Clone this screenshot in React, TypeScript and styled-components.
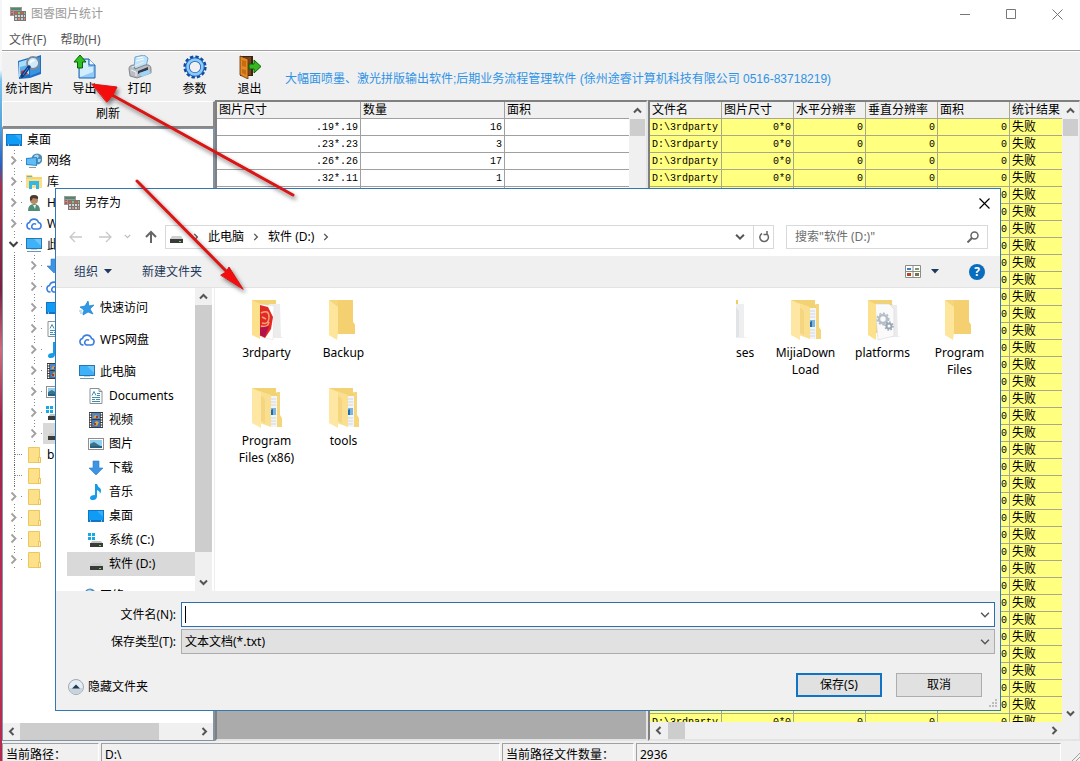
import React from "react";
import styled, { createGlobalStyle, css } from "styled-components";

const uiFont = `"Noto Sans", "Noto Sans CJK SC", sans-serif`;
const gridFont = `"Liberation Mono", "Noto Sans CJK SC", monospace`;

const GlobalStyle = createGlobalStyle`
  *, *::before, *::after { box-sizing: border-box; }
  body { margin: 0; overflow: hidden; background: #f0f0f0; color: #000; font: 12px/16px ${uiFont}; }
  button, input, select { font: inherit; color: inherit; margin: 0; padding: 0; border: 0; background: none; border-radius: 0; outline: none; }
  ul { list-style: none; margin: 0; padding: 0; }
  svg { display: block; flex: none; }
`;

/* ---------- icons ---------- */

type Kind =
  | "desktop" | "network" | "library" | "user" | "cloud" | "pc" | "download" | "doc"
  | "music" | "film" | "picture" | "windrive" | "drive" | "folder" | "star" | "app";

const shapes: Record<Kind, React.ReactNode> = {
  app: (
    <>
      <rect x="0" y="1" width="12" height="9" fill="#9a9a9a" />
      <rect x="1" y="2" width="10" height="2" fill="#4f8a6a" />
      <path d="M1 5h2v1H1zM1 7h2v2H1z" fill="#d9483a" />
      <path d="M4 5h2v1H4zM7 5h2v1H7z" fill="#e8e8e8" />
      <rect x="4" y="5" width="12" height="10" fill="#777" />
      <path d="M5 6h2v2H5zM11 6h2v2h-2z" fill="#e8534a" />
      <path d="M8 6h2v2H8zM14 6h1v2h-1z" fill="#7fc76b" />
      <path d="M5 9h2v2H5zM8 9h2v2H8zM11 9h2v2h-2zM14 9h1v2h-1z" fill="#d4d4d4" />
      <path d="M5 12h2v2H5zM11 12h2v2h-2z" fill="#c9c9c9" />
      <path d="M8 12h2v2H8zM14 12h1v2h-1z" fill="#e08a6a" />
    </>
  ),
  desktop: (
    <>
      <rect x="0" y="2" width="16" height="12" fill="#1275c4" />
      <rect x="1" y="3" width="14" height="9" fill="#109cf5" />
      <path d="M9 3h6v6z" fill="#36aefb" />
      <path d="M2 13h1M13 13h1" stroke="#fff" />
    </>
  ),
  network: (
    <>
      <circle cx="11" cy="6" r="5.500" fill="#4d8db8" />
      <path d="M8 3q3-3 5 0l-1 2-3 1zM12 6l3 0-1 3-2 0z" fill="#a8d5ee" />
      <path d="M0 5l11-1v9l-11-1z" fill="#2e87cf" />
      <path d="M1 6l9-1v7l-9-1z" fill="#63bdf4" />
      <path d="M3 14h7v1H3z" fill="#8d9aa5" />
    </>
  ),
  library: (
    <>
      <path d="M0 1h6l1 2h9v11H0z" fill="#f6d56e" />
      <path d="M1 2h5v1H1z" fill="#58b8e0" />
      <path d="M0 5h16v9H0z" fill="#fbe08a" />
      <path d="M3 7h10v8h-3v-4H6v4H3z" fill="#35b6e8" />
    </>
  ),
  user: (
    <>
      <path d="M2 16q0-7 6-7t6 7z" fill="#4f8d76" />
      <path d="M7 10l2 4 1-4z" fill="#eee" />
      <circle cx="8" cy="5" r="4" fill="#b98a66" />
      <path d="M4 5q-1-5 4-5t4 4l-5-1-2 3z" fill="#463a32" />
    </>
  ),
  cloud: (
    <path d="M4 13a3.300 3.300 0 0 1-.5-6.500A4.700 4.700 0 0 1 12.500 6.500 3.300 3.300 0 0 1 12 13H7.500q-2.500-1-1.500-3.500t3.500-1.500" fill="none" stroke="#3b7ee0" strokeWidth="1.600" strokeLinecap="round" />
  ),
  pc: (
    <>
      <rect x="0" y="1" width="16" height="11" fill="#2477b5" />
      <rect x="1" y="2" width="14" height="9" fill="#3fb1f8" />
      <path d="M8 2h7v7z" fill="#6cc6fb" />
      <path d="M5 12h6v1H5z" fill="#c4d2dc" />
      <path d="M1 14h14v1H1z" fill="#6f94ae" />
    </>
  ),
  download: <path d="M5 1h6v7h4l-7 7-7-7h4z" fill="#3f93e4" stroke="#2b7ac8" strokeWidth=".6" />,
  doc: (
    <>
      <path d="M2 .5h9l3 3v12H2z" fill="#fff" stroke="#8a9299" />
      <path d="M11 .5v3h3" fill="none" stroke="#8a9299" />
      <path d="M4 7.500l2-4 2 4M9 5.500h3M9 7.500h3M4 9.500h8M4 11.500h3M8 11.500h4M4 13.500h8" fill="none" stroke="#3f8fae" />
    </>
  ),
  music: <path d="M7 0h2q1 3 3 4 2 2 0 6 0-3-3-4v6q0 4-4 4-3 0-3-2 0-3 5-3z" fill="#149bea" />,
  film: (
    <>
      <rect x="1" y="0" width="14" height="16" fill="#3a3a3a" />
      <path d="M2.500 1v14M13.500 1v14" stroke="#fff" strokeWidth="1.500" strokeDasharray="1.500 1" />
      <rect x="4" y="1" width="8" height="6" fill="#4f86c6" />
      <rect x="4" y="8" width="8" height="7" fill="#3d74b8" />
      <path d="M5 6l2-3 3 1 1 2zM5 13l3-4 3 1-2 4z" fill="#e0a23c" />
      <path d="M8 4h2v2H8zM6 11h2v2H6z" fill="#a33a2c" />
    </>
  ),
  picture: (
    <>
      <rect x=".5" y="2.500" width="15" height="11" fill="#fff" stroke="#8f8f8f" />
      <rect x="2" y="4" width="12" height="8" fill="#8fd0f2" />
      <path d="M2 8l4-2 8 5v1H2z" fill="#3c7187" />
      <path d="M2 10h12v2H2z" fill="#27617e" />
    </>
  ),
  windrive: (
    <>
      <path d="M0 1h3v3H0zM4 1h3v3H4zM0 5h3v3H0zM4 5h3v3H4z" fill="#16a9e8" />
      <path d="M4 9h9l2 3H2z" fill="#c4c4c4" />
      <path d="M2 11h13v4H2z" fill="#3b3b3b" />
      <path d="M11 13h2v1h-2z" fill="#5fe05f" />
    </>
  ),
  drive: (
    <>
      <path d="M4 7h9l2 3H2z" fill="#cfcfcf" />
      <path d="M2 10h13v4H2z" fill="#3b3b3b" />
      <path d="M11 12h2v1h-2z" fill="#5fe05f" />
    </>
  ),
  folder: (
    <>
      <path d="M2.500.5h11v10h1v5h-12z" fill="#fde08a" stroke="#ecc85c" />
      <path d="M12.500 10.500h2v5h-2z" fill="#fdeebb" stroke="#e6bd4c" strokeWidth=".8" />
    </>
  ),
  star: (
    <>
      <path d="M9 1l1 5 5-1-4 4 3 5-5-2-5 3 1-5-4-3 5-1z" fill="#2f9be8" stroke="#1b7cc6" strokeWidth=".7" />
      <path d="M0 11h3M1 13h3" stroke="#7cc0f0" />
    </>
  ),
};

const Icon = ({ kind }: { kind: Kind }) => (
  <svg width="16" height="16" viewBox="0 0 16 16" aria-hidden="true">{shapes[kind]}</svg>
);

type Dir = "up" | "down" | "left" | "right";
const turns: Record<Dir, number> = { up: 180, down: 0, left: 90, right: 270 };
const Chevron = ({ dir, size = 9, color = "#555", weight = 2 }: { dir: Dir; size?: number; color?: string; weight?: number }) => (
  <svg width={size} height={size} viewBox="0 0 9 9" aria-hidden="true">
    <path d="M1 2.500l3.500 3.500L8 2.500" transform={`rotate(${turns[dir]} 4.5 4.5)`} fill="none" stroke={color} strokeWidth={weight} />
  </svg>
);

const toolIcons: Record<string, React.ReactNode> = {
  stat: (
    <>
      <path d="M0 6l10-3 2 1 11-4v19l-11 4-11 1z" fill="#1d6fc4" />
      <path d="M1 7l10-3v15l-10 3z" fill="#a9dcfa" />
      <path d="M12 5l10-3v15l-10 4z" fill="#3b94e0" />
      <path d="M2 12l8-2v6l-8 3z" fill="#5eaee8" />
      <path d="M3 16l4-1 3 4-7 3z" fill="#c93a2a" />
      <circle cx="15" cy="8" r="6" fill="#cfeafb" stroke="#7a8a9a" strokeWidth="1.800" />
      <path d="M12 6q3-3 5 0-3 0-5 3z" fill="#fff" />
      <path d="M11 12l-7 9" stroke="#123a80" strokeWidth="3.500" strokeLinecap="round" />
      <path d="M10 13l-5 7" stroke="#4a86d8" strokeWidth="1" />
    </>
  ),
  export: (
    <>
      <path d="M6 4h10l6 6v13H6z" fill="#8fcaf8" stroke="#1d62b0" />
      <path d="M7 5h8v7h5v5L7 22z" fill="#d4edfd" />
      <path d="M16 4v6h6" fill="#f3faff" stroke="#1d62b0" />
      <path d="M7 0l6 7H9.500v6h-5V7H1z" fill="#2fbf1f" stroke="#0b5f0b" />
    </>
  ),
  print: (
    <>
      <path d="M7 2l9-2 4 3-2 9-12 2z" fill="#bfe3fa" stroke="#5a93c0" strokeWidth=".8" />
      <path d="M9 3l6-1M8 6l8-2" stroke="#fff" />
      <path d="M1 14q0-4 5-4l1 4 10-4q6-1 6 4v4l-14 5-7-2z" fill="#b9bec4" stroke="#6d737a" strokeWidth=".8" />
      <path d="M3 15l5 2v4" fill="none" stroke="#f5f5f5" />
      <path d="M10 16l10-4v3l-10 4z" fill="#2f3b46" />
      <path d="M11 18l9-3 3 3-9 4z" fill="#9fd4f6" />
      <path d="M4 12l12-5" stroke="#eceff1" />
    </>
  ),
  gear: (
    <>
      <circle cx="12" cy="12" r="9.800" fill="none" stroke="#0e4a9e" strokeWidth="3.600" strokeDasharray="3.200 1.931" />
      <circle cx="12" cy="12" r="7.500" fill="none" stroke="#1d62b8" strokeWidth="4.500" />
      <circle cx="12" cy="12" r="7.400" fill="none" stroke="#8ccbfb" strokeWidth="2.600" />
      <circle cx="12" cy="12" r="4.500" fill="#f0f0f0" />
    </>
  ),
  exit: (
    <>
      <path d="M2 1h13v20H2z" fill="#3a2412" />
      <path d="M4 2h9v18H4z" fill="#7a4318" />
      <path d="M2 1l8 3v20l-8-4z" fill="#e58a23" stroke="#5a3010" strokeWidth=".8" />
      <path d="M4 5l4 1v6l-4-1zM4 14l4 1v5l-4-2z" fill="#c76c14" />
      <path d="M11 9h5V5l7 6.500-7 6.500v-4h-5z" fill="#35b820" stroke="#0b5f0b" />
    </>
  ),
};
const ToolIcon = ({ name }: { name: string }) => (
  <svg width="24" height="24" viewBox="0 0 24 24" aria-hidden="true">{toolIcons[name]}</svg>
);

type FolderKind = "empty" | "red" | "files" | "gears" | "sheet";
const BigFolder = ({ kind }: { kind: FolderKind }) => (
  <svg width="36" height="42" viewBox="0 0 36 42" aria-hidden="true">
    {kind === "empty" && (
      <>
        <path d="M3 1h24v22l2 3v9H9z" fill="#f6d67c" />
        <path d="M12 1h15v22l2 3v9H12z" fill="#f4d070" />
        <path d="M3 1l9 7v26l-1 7-8-5z" fill="#fde59c" />
      </>
    )}
    {kind !== "empty" && kind !== "sheet" && <path d="M3 1h24v4l3 3v26H6z" fill="#f3d274" />}
    {kind === "red" && (
      <>
        <path d="M20 5h11l1 33 3 1-12 0z" fill="#ececec" />
        <path d="M10 5l15 2-1 34-14-4z" fill="#fff" stroke="#ddd" strokeWidth=".5" />
        <path d="M11 6l8 2 5 10-2 12-6 9-6-3z" fill="#e02a22" />
        <path d="M12 14q8-4 8 4t-7 6M12 27q7 2 8-4M13 18l4 2" fill="none" stroke="#f7a07c" strokeWidth="1.500" />
        <path d="M10 29l10-2-4 11-6-2z" fill="#b3124a" />
        <path d="M3 1l8 4v35l-8-4z" fill="#fde08c" />
      </>
    )}
    {kind === "files" && (
      <>
        <path d="M20 9h8v26l2 5h-9z" fill="#f4f4f4" />
        <path d="M22 12h5M22 15h5M22 18h5M22 31h5M22 34h5M22 37h5" stroke="#cfd8de" />
        <path d="M22 21h5v7h-5z" fill="#7fb4dc" />
        <path d="M22 23l2-1v6h-2z" fill="#1c6eb4" />
        <path d="M28 5h3v23l2 3v9h-5z" fill="#f6d67c" />
        <path d="M11 4l11 4v32l-11-4z" fill="#fbdf90" />
        <path d="M12 9q5 1 4 8v19l-5-3z" fill="#f6d580" />
        <path d="M3 1l9 4v36l-9-5z" fill="#fde7a2" />
      </>
    )}
    {kind === "gears" && (
      <>
        <path d="M22 6h10l1 31 3 1-12 0z" fill="#ebebeb" />
        <path d="M10 5h14l5 5v27l-16 4z" fill="#fafafa" stroke="#d8d8d8" strokeWidth=".6" />
        <circle cx="18" cy="20" r="4" fill="none" stroke="#b4bec7" strokeWidth="2.500" />
        <circle cx="18" cy="20" r="5.800" fill="none" stroke="#b4bec7" strokeWidth="1.500" strokeDasharray="2 1.800" />
        <circle cx="24" cy="27" r="2.500" fill="none" stroke="#9aa7b3" strokeWidth="2" />
        <circle cx="24" cy="27" r="4" fill="none" stroke="#9aa7b3" strokeWidth="1.500" strokeDasharray="1.500 1.600" />
        <path d="M3 1l8 5v35l-8-5z" fill="#fde08c" />
      </>
    )}
    {kind === "sheet" && (
      <>
        <path d="M0 1h2v4H0z" fill="#f1cb63" />
        <path d="M0 5h8v33l4 1H0z" fill="#efefef" />
        <path d="M0 8l3 4v26H0z" fill="#e0e4e7" />
      </>
    )}
  </svg>
);

/* ---------- window frame ---------- */

const Screen = styled.div`
  position: relative;
  display: flex;
  height: 100vh;
`;
const Wallpaper = styled.div`
  flex: 0 0 2px;
  background: linear-gradient(#f4f6f8 0, #f4f6f8 70px, #7cc4ec 80px, #4f9fd8 130px, #2b5fc0 165px, #a8304c 185px, #7a2140 290px, #d06a80 350px, #a02048 420px, #c03058 640px, #b42850 100%);
`;
const Window = styled.div`
  flex: 1;
  min-width: 0;
  display: flex;
  flex-direction: column;
  background: #f0f0f0;
`;
const TitleBar = styled.header`
  flex: 0 0 28px;
  display: flex;
  align-items: center;
  padding-left: 8px;
  background: #fff;
  color: #999;
`;
const Caption = styled.span`
  flex: 1;
  padding-left: 5px;
`;
const CaptionButton = styled.button`
  width: 46px;
  height: 28px;
  display: grid;
  place-items: center;
  color: #777;
`;
const MenuBar = styled.nav`
  flex: 0 0 23px;
  display: flex;
  gap: 14px;
  padding: 2px 7px 0;
  background: #fff;
  border-bottom: 1px solid #a0a0a0;
  color: #555;
`;
const ToolBar = styled.div`
  flex: 0 0 49px;
  display: flex;
  align-items: center;
  border-top: 1px solid #fff;
`;
const ToolButton = styled.button`
  width: 55px;
  display: flex;
  flex-direction: column;
  align-items: center;
  gap: 2px;
  white-space: nowrap;
`;
const Slogan = styled.p`
  margin: 6px 0 0 8px;
  color: #2f93e6;
  font-family: "Liberation Sans", "Noto Sans CJK SC", sans-serif;
  white-space: nowrap;
`;
const Main = styled.main`
  flex: 1;
  min-height: 0;
  display: flex;
`;

/* ---------- scroll bars ---------- */

const Bar = styled.div<{ $across?: boolean }>`
  flex: 0 0 17px;
  display: flex;
  flex-direction: ${(p) => (p.$across ? "row" : "column")};
  background: #f0f0f0;
`;
const BarButton = styled.button`
  flex: 0 0 17px;
  min-width: 16px;
  display: grid;
  place-items: center;
`;
const Thumb = styled.div<{ $size: string }>`
  flex: 0 0 ${(p) => p.$size};
  margin: ${(p) => (p.$size === "17px" ? "0 1px" : "0")};
  background: #cdcdcd;
`;
const Space = styled.div`
  flex: 1;
`;
const ScrollBar = ({ across, thumb }: { across?: boolean; thumb: string }) => (
  <Bar $across={across}>
    <BarButton aria-label={across ? "向左" : "向上"}><Chevron dir={across ? "left" : "up"} /></BarButton>
    <Thumb $size={thumb} />
    <Space />
    <BarButton aria-label={across ? "向右" : "向下"}><Chevron dir={across ? "right" : "down"} /></BarButton>
  </Bar>
);

/* ---------- tree pane ---------- */

const TreePane = styled.section`
  flex: 0 0 213px;
  display: flex;
  flex-direction: column;
`;
const RefreshButton = styled.button`
  flex: 0 0 27px;
  margin-top: 1px;
  border: 1px solid #fff;
  border-right: 2px solid #888;
  border-bottom: 2px solid #888;
  background: #f0f0f0;
`;
const TreeBox = styled.div`
  flex: 1;
  min-height: 0;
  display: flex;
  flex-direction: column;
  border: 1px solid #8293a6;
  border-right-width: 2px;
  background: #fff;
`;
const TreeList = styled.ul`
  flex: 1;
  min-height: 0;
  overflow: hidden;
`;
const TreeRow = styled.li`
  height: 21px;
  display: flex;
`;
const TreeItem = styled.button<{ $selected?: boolean }>`
  display: flex;
  align-items: center;
  gap: 5px;
  padding: 0 3px;
  white-space: nowrap;
  background: ${(p) => (p.$selected ? "#d9d9d9" : "none")};
`;

type Gutter = "closed" | "open" | "leaf" | "through";
const GutterCell = ({ type }: { type: Gutter }) => (
  <svg width="20" height="21" viewBox="0 0 20 21" aria-hidden="true">
    {(type === "leaf" || type === "through") && <path d="M11.500 0v21" stroke="#666" strokeDasharray="1 1" />}
    {type === "leaf" && <path d="M12 10.500h8" stroke="#888" strokeDasharray="1 1" />}
    {(type === "closed" || type === "open") && (
      <>
        <path d="M11.500 0v4M11.500 18v3M18 10.500h2" stroke="#888" strokeDasharray="1 2" />
        {type === "closed" ? (
          <path d="M8.500 6.500l4 4-4 4" fill="none" stroke="#a0a0a0" strokeWidth="1.800" />
        ) : (
          <path d="M6.500 8l4 4 4-4" fill="none" stroke="#404040" strokeWidth="2" />
        )}
      </>
    )}
  </svg>
);

type Node = { icon: Kind; label: string; gutters: Gutter[]; selected?: boolean };
const nested = (icon: Kind, selected?: boolean): Node => ({ icon, label: "", gutters: ["through", "closed"], selected });
const tree: Node[] = [
  { icon: "desktop", label: "桌面", gutters: [] },
  { icon: "network", label: "网络", gutters: ["closed"] },
  { icon: "library", label: "库", gutters: ["closed"] },
  { icon: "user", label: "H", gutters: ["closed"] },
  { icon: "cloud", label: "W", gutters: ["closed"] },
  { icon: "pc", label: "此", gutters: ["open"] },
  nested("download"), nested("cloud"), nested("desktop"), nested("doc"), nested("music"),
  nested("film"), nested("picture"), nested("windrive"), nested("drive", true),
  { icon: "folder", label: "b", gutters: ["leaf"] },
  { icon: "folder", label: "", gutters: ["leaf"] },
  { icon: "folder", label: "", gutters: ["closed"] },
  { icon: "folder", label: "", gutters: ["closed"] },
  { icon: "folder", label: "", gutters: ["closed"] },
  { icon: "folder", label: "", gutters: ["closed"] },
];

/* ---------- data grids ---------- */

const sunken = css`
  border-top: 2px solid #808080;
  border-left: 2px solid #808080;
`;
const SizePane = styled.section`
  flex: 0 0 433px;
  display: flex;
  flex-direction: column;
  background: #ababab;
  border-bottom: 2px solid #e4e4e4;
  border-right: 2px solid #e4e4e4;
  ${sunken}
`;
const SizeView = styled.div`
  flex: 0 0 320px;
  display: flex;
`;
const ResultPane = styled.section`
  flex: 1;
  min-width: 0;
  display: flex;
  flex-direction: column;
  border-bottom: 2px solid #e4e4e4;
  border-right: 1px solid #e4e4e4;
  ${sunken}
`;
const ResultView = styled.div`
  flex: 1;
  min-height: 0;
  display: flex;
`;
const GridClip = styled.div`
  flex: 1;
  min-width: 0;
  overflow: hidden;
`;
const CornerRow = styled.div`
  flex: 0 0 17px;
  display: flex;
  padding-right: 16px;
  & > div { flex: 1; }
`;
const Grid = styled.table<{ $fill: string; $line: string }>`
  width: 100%;
  table-layout: fixed;
  border-collapse: separate;
  border-spacing: 0;
  font-family: ${gridFont};
  th, td {
    height: 17px;
    padding: 2px 2px 0;
    overflow: hidden;
    white-space: nowrap;
    line-height: 14px;
    font-weight: normal;
    text-align: left;
    border-right: 1px solid ${(p) => p.$line};
    border-bottom: 1px solid ${(p) => p.$line};
  }
  th { background: #f0f0f0; font-size: 12px; }
  td { background: ${(p) => p.$fill}; font-size: 10px; }
  th:last-child, td:last-child { border-right: 0; }
`;
const Num = styled.td`
  && { text-align: right; }
`;
const Verdict = styled.td`
  && { font-size: 12px; }
`;
const sizes = [[".19*.19", "16"], [".23*.23", "3"], [".26*.26", "17"], [".32*.11", "1"], ["", ""]];
const resultHeads = ["文件名", "图片尺寸", "水平分辨率", "垂直分辨率", "面积", "统计结果"];

/* ---------- status bar ---------- */

const StatusBar = styled.footer`
  flex: 0 0 20px;
  display: flex;
  gap: 2px;
  padding: 2px 19px 0 0;
  overflow: hidden;
`;
const StatusCell = styled.span<{ $width?: number }>`
  flex: ${(p) => (p.$width ? `0 0 ${p.$width}px` : "1")};
  padding: 3px 3px 0;
  border-top: 1px solid #a0a0a0;
  border-left: 1px solid #a0a0a0;
  border-right: 1px solid #fff;
  white-space: nowrap;
`;

/* ---------- dialog ---------- */

const Dialog = styled.div`
  position: absolute;
  inset: 188px 79px 50px 55px;
  display: flex;
  flex-direction: column;
  background: #fff;
  border: 1px solid #3079b5;
`;
const DialogTitle = styled.div`
  flex: 0 0 28px;
  display: flex;
  align-items: center;
  padding: 0 10px 0 8px;
`;
const NavRow = styled.div`
  flex: 0 0 39px;
  display: flex;
  align-items: center;
  padding: 0 12px;
`;
const NavButton = styled.button`
  width: 29px;
  height: 23px;
  display: grid;
  place-items: center;
  &:first-child { width: 15px; margin-right: 7px; }
`;
const SmallNav = styled(NavButton)`
  width: 17px;
`;
const Address = styled.div`
  flex: 1;
  height: 24px;
  display: flex;
  align-items: center;
  gap: 8px;
  padding-left: 2px;
  border: 1px solid #d9d9d9;
`;
const Crumb = styled.button`
  display: flex;
  align-items: center;
  gap: 8px;
  white-space: nowrap;
`;
const RefreshBox = styled.button`
  align-self: stretch;
  width: 20px;
  display: grid;
  place-items: center;
  border-left: 1px solid #d9d9d9;
`;
const SearchBox = styled.label`
  width: 202px;
  height: 24px;
  margin-left: 12px;
  display: flex;
  align-items: center;
  padding: 0 8px;
  border: 1px solid #d9d9d9;
  input { flex: 1; min-width: 0; }
  input::placeholder { color: #6d6d6d; opacity: 1; }
`;
const CommandRow = styled.div`
  flex: 0 0 32px;
  display: flex;
  align-items: center;
  gap: 30px;
  padding: 0 15px 0 18px;
  background: #f0f0f0;
  border-bottom: 1px solid #e3e3e3;
  color: #1e395b;
`;
const Command = styled.button`
  display: flex;
  align-items: center;
  gap: 6px;
`;
const ViewCommand = styled(Command)`
  gap: 10px;
  margin-left: auto;
`;
const Help = styled.button`
  width: 16px;
  height: 16px;
  border-radius: 50%;
  background: #0a6cbd;
  color: #fff;
  font-weight: 700;
  line-height: 16px;
`;
const Body = styled.div`
  flex: 1;
  min-height: 0;
  display: flex;
`;
const Sidebar = styled.div`
  flex: 0 0 156px;
  display: flex;
`;
const Places = styled.ul`
  flex: 1;
  overflow: hidden;
  padding-top: 4px;
`;
const SubPlaces = styled.ul`
  margin: -4px 0 4px;
`;
const Place = styled.button<{ $child?: boolean; $selected?: boolean }>`
  width: 100%;
  height: ${(p) => (p.$child ? 24 : 32)}px;
  display: flex;
  align-items: center;
  gap: 5px;
  padding-left: ${(p) => (p.$child ? 32 : 23)}px;
  white-space: nowrap;
  background: ${(p) => (p.$selected ? "linear-gradient(90deg, #fff 11px, #d9d9d9 11px)" : "none")};
`;
const Files = styled.ul`
  flex: 1;
  min-width: 0;
  margin-left: 2px;
  padding: 11px 0 0 13px;
  display: grid;
  grid-template-columns: repeat(10, 77px);
  grid-auto-rows: 88px;
  overflow: hidden;
  border-left: 1px solid #ededed;
`;
const FileCell = styled.li<{ $column: number }>`
  grid-column: ${(p) => p.$column};
`;
const File = styled.button`
  width: 100%;
  display: flex;
  flex-direction: column;
  align-items: center;
  gap: 3px;
  line-height: 17px;
`;
const CutFile = styled(File)`
  align-items: flex-start;
  padding-left: 46px;
`;
type PlaceData = { icon: Kind; label: string; selected?: boolean; children?: PlaceData[] };
const places: PlaceData[] = [
  { icon: "star", label: "快速访问" },
  { icon: "cloud", label: "WPS网盘" },
  {
    icon: "pc",
    label: "此电脑",
    children: [
      { icon: "doc", label: "Documents" },
      { icon: "film", label: "视频" },
      { icon: "picture", label: "图片" },
      { icon: "download", label: "下载" },
      { icon: "music", label: "音乐" },
      { icon: "desktop", label: "桌面" },
      { icon: "windrive", label: "系统 (C:)" },
      { icon: "drive", label: "软件 (D:)", selected: true },
    ],
  },
  { icon: "network", label: "网络" },
];
const files: { name: string[]; kind: FolderKind; column: number; cut?: boolean }[] = [
  { name: ["3rdparty"], kind: "red", column: 1 },
  { name: ["Backup"], kind: "empty", column: 2 },
  { name: ["ses"], kind: "sheet", column: 7, cut: true },
  { name: ["MijiaDown", "Load"], kind: "files", column: 8 },
  { name: ["platforms"], kind: "gears", column: 9 },
  { name: ["Program", "Files"], kind: "empty", column: 10 },
  { name: ["Program", "Files (x86)"], kind: "files", column: 1 },
  { name: ["tools"], kind: "files", column: 2 },
];

const Footer = styled.form`
  flex: 0 0 119px;
  display: flex;
  flex-direction: column;
  padding: 11px 5px 0 12px;
  background: #f0f0f0;
`;
const Field = styled.div`
  display: grid;
  grid-template-columns: 108px 1fr;
  gap: 5px;
  align-items: center;
  margin-bottom: 2px;
  label { text-align: right; white-space: nowrap; }
`;
const Combo = styled.div<{ $active?: boolean }>`
  height: 25px;
  display: flex;
  align-items: center;
  padding: 0 4px 0 3px;
  border: 1px solid ${(p) => (p.$active ? "#2a6fb0" : "#adadad")};
  background: ${(p) => (p.$active ? "#fff" : "#e1e1e1")};
  input, select { flex: 1; min-width: 0; appearance: none; }
`;
const TextCaret = styled.span`
  width: 1px;
  height: 17px;
  background: #000;
`;
const Actions = styled.div`
  display: flex;
  align-items: center;
  gap: 14px;
  margin-top: 17px;
  padding-right: 13px;
`;
const HideFolders = styled.button`
  display: flex;
  align-items: center;
  gap: 4px;
  margin: 4px auto 0 0;
`;
const PushButton = styled.button<{ $primary?: boolean }>`
  width: 86px;
  height: 24px;
  background: #e1e1e1;
  border: ${(p) => (p.$primary ? "2px solid #1173c5" : "1px solid #adadad")};
`;
const Grip = styled.svg`
  position: absolute;
  right: 2px;
  bottom: 2px;
`;
const WindowGrip = styled.svg`
  position: absolute;
  right: 0;
  bottom: 0;
`;
const Annotations = styled.svg`
  position: absolute;
  inset: 0;
  pointer-events: none;
`;

const DropMark = () => (
  <svg width="8" height="5" viewBox="0 0 8 5" aria-hidden="true"><path d="M0 0h8L4 4.500z" fill="#1e395b" /></svg>
);
const Arrow = ({ left, color }: { left?: boolean; color: string }) => (
  <svg width="14" height="14" viewBox="0 0 14 14" aria-hidden="true">
    <path d="M1 7h12M8 2l5 5-5 5" transform={left ? "rotate(180 7 7)" : undefined} fill="none" stroke={color} strokeWidth="1.300" />
  </svg>
);

export default function App() {
  return (
    <Screen>
      <GlobalStyle />
      <Wallpaper />
      <Window>
        <TitleBar>
          <Icon kind="app" />
          <Caption>图睿图片统计</Caption>
          <CaptionButton aria-label="最小化"><svg width="10" height="10"><path d="M0 5.500h10" stroke="currentColor" /></svg></CaptionButton>
          <CaptionButton aria-label="最大化"><svg width="10" height="10"><path d="M.5.5h9v9h-9z" fill="none" stroke="currentColor" /></svg></CaptionButton>
          <CaptionButton aria-label="关闭"><svg width="11" height="11"><path d="M.5.5l10 10M10.500.5l-10 10" stroke="currentColor" /></svg></CaptionButton>
        </TitleBar>
        <MenuBar>
          <button>文件(F)</button>
          <button>帮助(H)</button>
        </MenuBar>
        <ToolBar>
          {[["stat", "统计图片"], ["export", "导出"], ["print", "打印"], ["gear", "参数"], ["exit", "退出"]].map(([icon, label]) => (
            <ToolButton key={icon}><ToolIcon name={icon} />{label}</ToolButton>
          ))}
          <Slogan>大幅面喷墨、激光拼版输出软件;后期业务流程管理软件 (徐州途睿计算机科技有限公司 0516-83718219)</Slogan>
        </ToolBar>
        <Main>
          <TreePane>
            <RefreshButton>刷新</RefreshButton>
            <TreeBox>
              <TreeList>
                {tree.map((n, i) => (
                  <TreeRow key={i}>
                    {n.gutters.map((g, j) => <GutterCell key={j} type={g} />)}
                    <TreeItem $selected={n.selected} aria-label={n.label ? undefined : n.icon}><Icon kind={n.icon} />{n.label}</TreeItem>
                  </TreeRow>
                ))}
              </TreeList>
              <ScrollBar across thumb="139px" />
            </TreeBox>
          </TreePane>
          <SizePane>
            <SizeView>
              <GridClip>
                <Grid $fill="#fff" $line="#a0a0a0">
                  <colgroup><col width="144" /><col width="144" /><col /></colgroup>
                  <thead><tr><th>图片尺寸</th><th>数量</th><th>面积</th></tr></thead>
                  <tbody>
                    {sizes.map(([size, count], i) => (
                      <tr key={i}><Num>{size}</Num><Num>{count}</Num><td /></tr>
                    ))}
                  </tbody>
                </Grid>
              </GridClip>
              <ScrollBar thumb="17px" />
            </SizeView>
          </SizePane>
          <ResultPane>
            <ResultView>
              <GridClip>
                <Grid $fill="#ffff80" $line="#a8a88c">
                  <colgroup><col width="72" /><col width="72" /><col width="72" /><col width="72" /><col width="72" /><col /></colgroup>
                  <thead><tr>{resultHeads.map((h) => <th key={h}>{h}</th>)}</tr></thead>
                  <tbody>
                    {Array.from({ length: 36 }, (_, i) => (
                      <tr key={i}>
                        <td>D:\3rdparty</td><Num>0*0</Num><Num>0</Num><Num>0</Num><Num>0</Num><Verdict>失败</Verdict>
                      </tr>
                    ))}
                  </tbody>
                </Grid>
              </GridClip>
              <ScrollBar thumb="17px" />
            </ResultView>
            <CornerRow><ScrollBar across thumb="17px" /></CornerRow>
          </ResultPane>
        </Main>
        <StatusBar>
          <StatusCell $width={97}>当前路径：</StatusCell>
          <StatusCell $width={399}>D:\</StatusCell>
          <StatusCell $width={132}>当前路径文件数量：</StatusCell>
          <StatusCell>2936</StatusCell>
        </StatusBar>
        <WindowGrip width="12" height="8" viewBox="0 0 12 8" aria-hidden="true">
          <path d="M4 8l8-8M8 8l4-4" stroke="#a0a0a0" />
        </WindowGrip>
      </Window>

      <Dialog role="dialog" aria-label="另存为">
        <DialogTitle>
          <Icon kind="app" />
          <Caption>另存为</Caption>
          <button aria-label="关闭"><svg width="11" height="11"><path d="M.5.5l10 10M10.500.5l-10 10" stroke="#000" strokeWidth="1.200" /></svg></button>
        </DialogTitle>
        <NavRow>
          <NavButton aria-label="后退"><Arrow left color="#c8c8c8" /></NavButton>
          <NavButton aria-label="前进"><Arrow color="#c8c8c8" /></NavButton>
          <SmallNav aria-label="最近位置"><Chevron dir="down" size={7} color="#bbb" weight={1.5} /></SmallNav>
          <NavButton aria-label="上移">
            <svg width="14" height="14"><path d="M7 13V2M2 7l5-5 5 5" fill="none" stroke="#666" strokeWidth="2" /></svg>
          </NavButton>
          <Address>
            <Crumb aria-label="驱动器"><Icon kind="drive" /><Chevron dir="right" size={8} weight={1.5} /></Crumb>
            <Crumb>此电脑 <Chevron dir="right" size={8} weight={1.5} /></Crumb>
            <Crumb>软件 (D:) <Chevron dir="right" size={8} weight={1.5} /></Crumb>
            <Space />
            <Chevron dir="down" size={10} weight={1.8} />
            <RefreshBox aria-label="刷新">
              <svg width="12" height="12" viewBox="0 0 12 12"><path d="M3 3a4.300 4.300 0 1 0 5-.5M3 0v3.500h3.500" fill="none" stroke="#666" strokeWidth="1.500" transform="matrix(-1 0 0 1 12 0)" /></svg>
            </RefreshBox>
          </Address>
          <SearchBox>
            <input aria-label="搜索" placeholder={'搜索"软件 (D:)"'} />
            <svg width="12" height="12" viewBox="0 0 12 12"><circle cx="7.500" cy="4.500" r="3.500" fill="none" stroke="#666" strokeWidth="1.500" /><path d="M5 7l-4.500 4.500" stroke="#666" strokeWidth="2" /></svg>
          </SearchBox>
        </NavRow>
        <CommandRow>
          <Command>组织 <DropMark /></Command>
          <Command>新建文件夹</Command>
          <ViewCommand aria-label="视图">
            <svg width="16" height="14" viewBox="0 0 16 14">
              <path d="M.5.5h15v12H.5zM8 .5v12M.5 6.500h15" fill="#fff" stroke="#8c8c8c" />
              <path d="M2 3h4v2H2z" fill="#3c7fc0" /><path d="M10 3h4v2h-4z" fill="#6fa05a" />
              <path d="M2 8h4v3H2z" fill="#b8451e" /><path d="M10 8h4v3h-4z" fill="#7c7248" />
            </svg>
            <DropMark />
          </ViewCommand>
          <Help aria-label="帮助">?</Help>
        </CommandRow>
        <Body>
          <Sidebar>
            <Places>
              {places.map((p) => (
                <li key={p.label}>
                  <Place><Icon kind={p.icon} />{p.label}</Place>
                  {p.children && (
                    <SubPlaces>
                      {p.children.map((c) => (
                        <li key={c.label}><Place $child $selected={c.selected}><Icon kind={c.icon} />{c.label}</Place></li>
                      ))}
                    </SubPlaces>
                  )}
                </li>
              ))}
            </Places>
            <ScrollBar thumb="247px" />
          </Sidebar>
          <Files>
            {files.map((f) => {
              const Tile = f.cut ? CutFile : File;
              return (
                <FileCell key={f.name.join()} $column={f.column}>
                  <Tile>
                    <BigFolder kind={f.kind} />
                    <span>{f.name.map((line, i) => <React.Fragment key={line}>{i > 0 && <br />}{line}</React.Fragment>)}</span>
                  </Tile>
                </FileCell>
              );
            })}
          </Files>
        </Body>
        <Footer onSubmit={(e) => e.preventDefault()}>
          <Field>
            <label htmlFor="file-name">文件名(N):</label>
            <Combo $active><TextCaret /><input id="file-name" type="text" /><Chevron dir="down" size={10} weight={1.3} /></Combo>
          </Field>
          <Field>
            <label htmlFor="file-type">保存类型(T):</label>
            <Combo><select id="file-type"><option>文本文档(*.txt)</option></select><Chevron dir="down" size={10} weight={1.3} /></Combo>
          </Field>
          <Actions>
            <HideFolders type="button">
              <svg width="16" height="16" viewBox="0 0 16 16">
                <circle cx="8" cy="8" r="7.500" fill="#e6edf3" stroke="#9aa9b5" />
                <path d="M1 9h14q-1 6-7 6T1 9z" fill="#c9d3db" />
                <path d="M4 9.500h8L8 5.500z" fill="#1e395b" />
              </svg>
              隐藏文件夹
            </HideFolders>
            <PushButton $primary type="submit">保存(S)</PushButton>
            <PushButton type="button">取消</PushButton>
          </Actions>
        </Footer>
        <Grip width="10" height="9" viewBox="0 0 10 9" aria-hidden="true">
          <path d="M7 0h2v2H7zM7 3h2v2H7zM7 6h2v2H7zM4 3h2v2H4zM4 6h2v2H4zM1 6h2v2H1z" fill="#bdbdbd" />
        </Grip>
      </Dialog>

      <Annotations width="320" height="310" viewBox="0 0 320 310" aria-hidden="true">
        <defs>
          <filter id="shade" x="-20%" y="-20%" width="140%" height="140%">
            <feDropShadow dx="2" dy="3" stdDeviation="2" floodColor="#000" floodOpacity=".5" />
          </filter>
        </defs>
        <g filter="url(#shade)" fill="#f41010" stroke="#d81414" strokeLinecap="round">
          <path d="M293 195L112 95" strokeWidth="3" />
          <path d="M92 84l25 3-4 8-6 7z" strokeWidth="1" />
          <path d="M137 181l92 93" strokeWidth="3" />
          <path d="M243 289l-14-22-3 5-5 3z" strokeWidth="1" />
        </g>
      </Annotations>
    </Screen>
  );
}
